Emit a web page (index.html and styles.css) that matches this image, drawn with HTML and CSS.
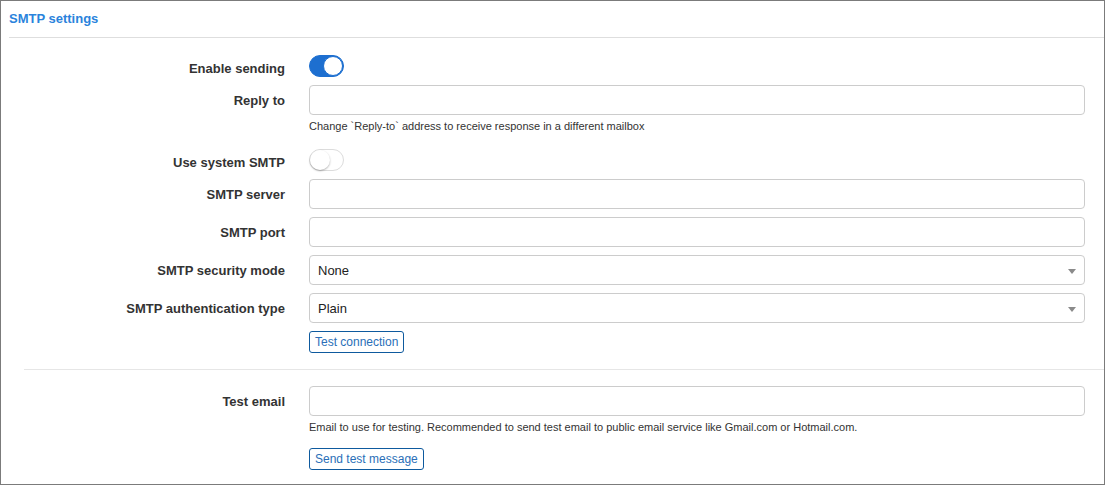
FILE: index.html
```html
<!DOCTYPE html>
<html lang="en">
<head>
<meta charset="utf-8">
<title>SMTP settings</title>
<link rel="stylesheet" href="styles.css">
</head>
<body>
<div class="card">
  <div class="card-header"><h2 class="card-title">SMTP settings</h2></div>
  <form class="form">
    <div class="row row-toggle">
      <label class="label">Enable sending</label>
      <div class="control"><span class="toggle on"><span class="knob"></span></span></div>
    </div>
    <div class="row row-help">
      <label class="label">Reply to</label>
      <div class="control">
        <input class="input" type="text">
        <p class="help">Change `Reply-to` address to receive response in a different mailbox</p>
      </div>
    </div>
    <div class="row row-toggle">
      <label class="label">Use system SMTP</label>
      <div class="control"><span class="toggle"><span class="knob"></span></span></div>
    </div>
    <div class="row">
      <label class="label">SMTP server</label>
      <div class="control"><input class="input" type="text"></div>
    </div>
    <div class="row">
      <label class="label">SMTP port</label>
      <div class="control"><input class="input" type="text"></div>
    </div>
    <div class="row">
      <label class="label">SMTP security mode</label>
      <div class="control"><div class="select">None<span class="caret"></span></div></div>
    </div>
    <div class="row">
      <label class="label">SMTP authentication type</label>
      <div class="control"><div class="select">Plain<span class="caret"></span></div></div>
    </div>
    <div class="row row-btn">
      <span></span>
      <div class="control"><button type="button" class="btn">Test connection</button></div>
    </div>
    <hr class="sep">
    <div class="row row-help">
      <label class="label">Test email</label>
      <div class="control">
        <input class="input" type="text">
        <p class="help">Email to use for testing. Recommended to send test email to public email service like Gmail.com or Hotmail.com.</p>
        <button type="button" class="btn btn-send">Send test message</button>
      </div>
    </div>
  </form>
</div>
</body>
</html>
```
FILE: styles.css
```css
* { box-sizing: border-box; }
html, body { margin: 0; padding: 0; background: #fff; }
body {
  font-family: "Liberation Sans", Arial, Helvetica, sans-serif;
  color: #333;
  font-size: 13px;
}
.card {
  width: 1105px;
  height: 485px;
  border: 1px solid #7b7b7b;
  overflow: hidden;
}
.card-header {
  margin-left: 8px;
  height: 37px;
  border-bottom: 1px solid #dedede;
  display: flex;
  align-items: center;
}
.card-title {
  margin: 0;
  font-size: 13px;
  font-weight: bold;
  color: #2a83dc;
  line-height: 16px;
}
.form {
  padding-top: 17px;
}
.row {
  display: grid;
  grid-template-columns: 284px 776px;
  column-gap: 24px;
  align-items: center;
  margin-bottom: 8px;
}
.row-help { align-items: start; margin-bottom: 15px; }
.row-help .label { line-height: 30px; padding-top: 1px; }
.row-btn { margin-bottom: 0; }
.label {
  text-align: right;
  font-weight: bold;
  font-size: 13px;
  color: #333;
}
.row-toggle .label { padding-top: 4px; }
.control { display: flex; flex-direction: column; align-items: flex-start; }
.input, .select {
  width: 776px;
  height: 30px;
  border: 1px solid #cccccc;
  border-radius: 4px;
  background: #fff;
  font-family: inherit;
  font-size: 13px;
  padding: 0 8px;
  margin: 0;
}
.select {
  display: flex;
  align-items: center;
  position: relative;
  color: #222;
  padding-top: 1px;
}
.caret {
  position: absolute;
  right: 8px;
  top: 13px;
  width: 0;
  height: 0;
  border-left: 4px solid transparent;
  border-right: 4px solid transparent;
  border-top: 5px solid #8a8a8a;
}
.help {
  margin: 4px 0 0;
  font-size: 11px;
  line-height: 15px;
  color: #333;
}
.toggle {
  display: block;
  width: 35px;
  height: 22px;
  border-radius: 11px;
  border: 1px solid #dcdcdc;
  background: #fff;
  position: relative;
}
.toggle .knob {
  position: absolute;
  top: 0;
  left: 0;
  width: 20px;
  height: 20px;
  border-radius: 50%;
  background: #fff;
  box-shadow: 0 1px 2px rgba(0,0,0,0.3);
}
.toggle.on {
  background: #1d6fd0;
  border-color: #1d6fd0;
}
.toggle.on .knob {
  left: 13px;
  box-shadow: none;
  border: 1px solid #1d6fd0;
}
.btn {
  height: 22px;
  padding: 0 5px;
  border: 1px solid #0e5a9e;
  border-radius: 3px;
  background: #fff;
  color: #2a6fb8;
  font-family: inherit;
  font-size: 12px;
  line-height: 20px;
  cursor: pointer;
}
.btn-send { margin-top: 13px; }
.sep {
  margin: 16px 0 16px 23px;
  border: 0;
  border-top: 1px solid #e6e6e6;
  height: 0;
}
```
